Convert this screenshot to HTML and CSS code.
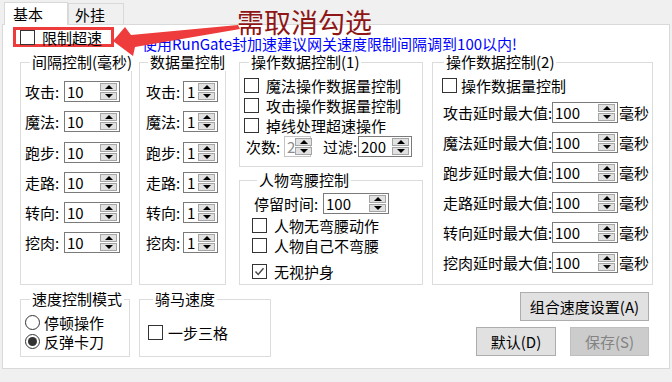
FILE: index.html
```html
<!DOCTYPE html>
<html lang="zh-CN">

<head>
    <meta charset="UTF-8">
    <title>速度控制</title>
    <link rel="stylesheet" href="styles.css">
</head>

<body>
    <div class="window">
        <div class="tabs">
            <div class="tab active">基本</div>
            <div class="tab">外挂</div>
        </div>

        <div class="page">
            <div class="top-row">
                <label class="check mark-box"><span class="box"></span>限制超速</label>
                <span class="notice">使用RunGate封加速建议网关速度限制间隔调到100以内!</span>
            </div>

            <div class="groups">
                <fieldset class="group g-interval">
                    <legend>间隔控制(毫秒)</legend>
                    <div class="rows">
                        <div class="row"><span class="lbl">攻击:</span><div class="spin"><span class="val">10</span><span class="arrows"><i></i><i class="dn"></i></span></div></div>
                        <div class="row"><span class="lbl">魔法:</span><div class="spin"><span class="val">10</span><span class="arrows"><i></i><i class="dn"></i></span></div></div>
                        <div class="row"><span class="lbl">跑步:</span><div class="spin"><span class="val">10</span><span class="arrows"><i></i><i class="dn"></i></span></div></div>
                        <div class="row"><span class="lbl">走路:</span><div class="spin"><span class="val">10</span><span class="arrows"><i></i><i class="dn"></i></span></div></div>
                        <div class="row"><span class="lbl">转向:</span><div class="spin"><span class="val">10</span><span class="arrows"><i></i><i class="dn"></i></span></div></div>
                        <div class="row"><span class="lbl">挖肉:</span><div class="spin"><span class="val">10</span><span class="arrows"><i></i><i class="dn"></i></span></div></div>
                    </div>
                </fieldset>

                <fieldset class="group g-amount">
                    <legend>数据量控制</legend>
                    <div class="rows">
                        <div class="row"><span class="lbl">攻击:</span><div class="spin"><span class="val">1</span><span class="arrows"><i></i><i class="dn"></i></span></div></div>
                        <div class="row"><span class="lbl">魔法:</span><div class="spin"><span class="val">1</span><span class="arrows"><i></i><i class="dn"></i></span></div></div>
                        <div class="row"><span class="lbl">跑步:</span><div class="spin"><span class="val">1</span><span class="arrows"><i></i><i class="dn"></i></span></div></div>
                        <div class="row"><span class="lbl">走路:</span><div class="spin"><span class="val">1</span><span class="arrows"><i></i><i class="dn"></i></span></div></div>
                        <div class="row"><span class="lbl">转向:</span><div class="spin"><span class="val">1</span><span class="arrows"><i></i><i class="dn"></i></span></div></div>
                        <div class="row"><span class="lbl">挖肉:</span><div class="spin"><span class="val">1</span><span class="arrows"><i></i><i class="dn"></i></span></div></div>
                    </div>
                </fieldset>

                <div class="col-mid">
                    <fieldset class="group g-op1">
                        <legend>操作数据控制(1)</legend>
                        <label class="check"><span class="box"></span>魔法操作数据量控制</label>
                        <label class="check"><span class="box"></span>攻击操作数据量控制</label>
                        <label class="check"><span class="box"></span>掉线处理超速操作</label>
                        <div class="row">
                            <span class="lbl l-times">次数:</span>
                            <div class="spin s-times off"><span class="val">2</span><span class="arrows"><i></i><i class="dn"></i></span></div>
                            <span class="lbl l-filter">过滤:</span>
                            <div class="spin s-filter"><span class="val">200</span><span class="arrows"><i></i><i class="dn"></i></span></div>
                        </div>
                    </fieldset>

                    <fieldset class="group g-bend">
                        <legend>人物弯腰控制</legend>
                        <div class="row">
                            <span class="lbl">停留时间:</span>
                            <div class="spin s-stay"><span class="val">100</span><span class="arrows"><i></i><i class="dn"></i></span></div>
                        </div>
                        <label class="check"><span class="box"></span>人物无弯腰动作</label>
                        <label class="check"><span class="box"></span>人物自己不弯腰</label>
                        <label class="check last"><span class="box"><svg viewBox="0 0 13 13" width="13" height="13"><polyline points="2.5,6.5 5.2,9.5 10.5,3.2" fill="none" stroke="#444" stroke-width="1.4" /></svg></span>无视护身</label>
                    </fieldset>
                </div>

                <fieldset class="group g-op2">
                    <legend>操作数据控制(2)</legend>
                    <label class="check"><span class="box"></span>操作数据量控制</label>
                    <div class="rows">
                        <div class="row"><span class="lbl">攻击延时最大值:</span><div class="spin"><span class="val">100</span><span class="arrows"><i></i><i class="dn"></i></span></div><span class="unit">毫秒</span></div>
                        <div class="row"><span class="lbl">魔法延时最大值:</span><div class="spin"><span class="val">100</span><span class="arrows"><i></i><i class="dn"></i></span></div><span class="unit">毫秒</span></div>
                        <div class="row"><span class="lbl">跑步延时最大值:</span><div class="spin"><span class="val">100</span><span class="arrows"><i></i><i class="dn"></i></span></div><span class="unit">毫秒</span></div>
                        <div class="row"><span class="lbl">走路延时最大值:</span><div class="spin"><span class="val">100</span><span class="arrows"><i></i><i class="dn"></i></span></div><span class="unit">毫秒</span></div>
                        <div class="row"><span class="lbl">转向延时最大值:</span><div class="spin"><span class="val">100</span><span class="arrows"><i></i><i class="dn"></i></span></div><span class="unit">毫秒</span></div>
                        <div class="row"><span class="lbl">挖肉延时最大值:</span><div class="spin"><span class="val">100</span><span class="arrows"><i></i><i class="dn"></i></span></div><span class="unit">毫秒</span></div>
                    </div>
                </fieldset>
            </div>

            <div class="bottom-row">
                <fieldset class="group g-mode">
                    <legend>速度控制模式</legend>
                    <label class="radio"><span class="dot"></span>停顿操作</label>
                    <label class="radio"><span class="dot on"></span>反弹卡刀</label>
                </fieldset>

                <fieldset class="group g-horse">
                    <legend>骑马速度</legend>
                    <label class="check"><span class="box"></span>一步三格</label>
                </fieldset>

                <div class="buttons">
                    <button class="btn b-combo">组合速度设置(A)</button>
                    <div class="btn-row">
                        <button class="btn b-default">默认(D)</button>
                        <button class="btn b-save" disabled>保存(S)</button>
                    </div>
                </div>
            </div>
        </div>

        <!-- 截图上的标注：红箭头和提示字 -->
        <svg class="arrow" width="672" height="382" viewBox="0 0 672 382">
            <polygon points="113,41 125,27 131,35 238,25 240,29 135,47 133,56" fill="#ee3b3b" />
        </svg>
        <div class="callout">需取消勾选</div>
    </div>
</body>

</html>
```

FILE: styles.css
```css
* {
    box-sizing: border-box;
    margin: 0;
    padding: 0;
}

body {
    width: 672px;
    height: 382px;
    overflow: hidden;
    background-color: #f0f0f0;
    font-family: "Noto Sans CJK SC", sans-serif;
    font-size: 15px;
    color: #000;
}

.window {
    position: relative;
    width: 672px;
    height: 382px;
}

/* 标签页 */
.tabs {
    display: flex;
    align-items: flex-end;
    height: 24px;
    padding-left: 4px;
}

.tab {
    width: 56px;
    height: 21px;
    padding-left: 6px;
    line-height: 21px;
    border: 1px solid #d9d9d9;
    border-bottom: none;
    background-color: #f0f0f0;
}

.tab.active {
    position: relative;
    z-index: 1;
    width: 64px;
    height: 23px;
    margin-bottom: -1px;
    padding-left: 8px;
    line-height: 22px;
    background-color: #fff;
}

.page {
    width: 668px;
    height: 345px;
    margin-left: 2px;
    padding: 0 20px 0 17px;
    border: 1px solid #d9d9d9;
    background-color: #fff;
}

.top-row {
    display: flex;
    align-items: flex-start;
    height: 28px;
    margin-left: -7px;
}

.mark-box {
    width: 101px;
    height: 25px;
    margin-top: 2px;
    padding-left: 4px;
    border: 3px solid #ee3b3b;
}

.notice {
    margin-top: 10px;
    margin-left: 28px;
    line-height: 17px;
    color: #0000ff;
    white-space: nowrap;
}

/* 分组框 */
.groups {
    display: flex;
    height: 232px;
    margin-right: -4px;
}

.group {
    flex-shrink: 0;
    border: 1px solid #dcdcdc;
    min-width: 0;
}

.group legend {
    margin-left: 5px;
    padding: 0 2px;
    line-height: 18px;
    white-space: nowrap;
}

.g-amount legend,
.g-op2 legend {
    margin-left: 2px;
}

.g-interval {
    width: 112px;
    height: 232px;
    padding-left: 4px;
}

.g-amount {
    width: 87px;
    height: 232px;
    margin-left: 7px;
    padding-left: 6px;
}

.col-mid {
    display: flex;
    flex-direction: column;
    gap: 4px;
    width: 184px;
    margin-left: 13px;
}

.g-op1 {
    height: 114px;
    padding: 4px 0 0 4px;
}

.g-bend {
    height: 114px;
    padding: 4px 0 0 12px;
}

.g-op2 {
    width: 221px;
    height: 232px;
    margin-left: 9px;
    padding: 4px 0 0 9px;
}

.rows {
    display: flex;
    flex-direction: column;
    gap: 9.3px;
}

.g-interval .rows,
.g-amount .rows {
    padding-top: 10px;
}

.g-op2 .rows {
    gap: 9px;
    margin-top: 7px;
    padding-left: 1px;
}

.row {
    display: flex;
    align-items: center;
    height: 21px;
    white-space: nowrap;
}

.lbl {
    flex-shrink: 0;
}

.g-interval .lbl { width: 39px; }
.g-amount .lbl { width: 37px; }
.g-op2 .lbl { width: 109px; }
.g-bend .lbl { width: 69px; }
.l-times { width: 38px; }
.l-filter { width: 35px; margin-left: 12px; }

.g-op1 .row {
    margin-top: 1px;
    padding-left: 2px;
}

.g-bend .row {
    padding-left: 2px;
}

.unit {
    margin-left: 1px;
}

/* 数字微调框 */
.spin {
    display: flex;
    align-items: center;
    flex-shrink: 0;
    height: 21px;
    padding: 0 2px 0 2px;
    border: 1px solid #7a7a7a;
    background-color: #fff;
}

.spin .val {
    flex: 1;
    line-height: 19px;
}

.spin.off {
    border-color: #c4c4c4;
}

.spin.off .val {
    color: #8c8c8c;
}

.g-interval .spin { width: 56px; }
.g-amount .spin { width: 35px; padding-left: 3px; }
.g-op2 .spin { width: 66px; }
.s-times { width: 27px; }
.s-filter { width: 54px; }
.s-stay { width: 66px; }

.arrows {
    display: flex;
    flex-direction: column;
    gap: 1px;
}

.arrows i {
    display: flex;
    align-items: center;
    justify-content: center;
    width: 17px;
    height: 8px;
    border: 1px solid #a5a5a5;
    background-color: #e1e1e1;
}

.arrows i::after {
    content: "";
    border-left: 4px solid transparent;
    border-right: 4px solid transparent;
    border-bottom: 4px solid #000;
}

.arrows i.dn::after {
    border-bottom: none;
    border-top: 4px solid #000;
}

/* 复选框 单选框 */
.check,
.radio {
    display: flex;
    align-items: center;
    height: 20px;
    white-space: nowrap;
}

.check .box {
    display: flex;
    flex-shrink: 0;
    width: 15px;
    height: 15px;
    margin-right: 7px;
    border: 1px solid #333;
    background-color: #fff;
}

.g-op2 .check .box { margin-right: 4px; }
.g-horse .check .box { margin-right: 5px; }

.g-bend .check:first-of-type {
    margin-top: 1px;
}

.check.last {
    margin-top: 6px;
}

.g-mode {
    width: 110px;
    height: 67px;
    padding: 5px 0 0 4px;
}

.g-horse {
    width: 132px;
    height: 67px;
    margin-left: 9px;
    padding: 14px 0 0 8px;
}

.radio {
    height: 19px;
}

.radio .dot {
    display: flex;
    align-items: center;
    justify-content: center;
    width: 15px;
    height: 15px;
    margin-right: 4px;
    border: 1px solid #333;
    border-radius: 50%;
}

.radio .dot.on::after {
    content: "";
    width: 9px;
    height: 9px;
    border-radius: 50%;
    background-color: #333;
}

.bottom-row {
    display: flex;
    align-items: flex-start;
    margin-top: 5px;
}

/* 按钮 */
.buttons {
    display: flex;
    flex-direction: column;
    align-items: flex-end;
    gap: 6px;
    margin-left: auto;
    margin-top: 2px;
}

.btn-row {
    display: flex;
    gap: 14px;
}

.btn {
    height: 29px;
    border: 1px solid #adadad;
    background-color: #e1e1e1;
    font-family: inherit;
    font-size: 15px;
    color: #000;
}

.b-combo { width: 129px; }
.b-default { width: 80px; }

.b-save {
    width: 79px;
    border-color: #bfbfbf;
    background-color: #cccccc;
    color: #838383;
}

/* 标注 */
.arrow {
    position: absolute;
    left: 0;
    top: 0;
    pointer-events: none;
}

.callout {
    position: absolute;
    left: 237px;
    top: 10px;
    font-size: 27px;
    line-height: 24px;
    color: #8e1616;
    white-space: nowrap;
}
```
